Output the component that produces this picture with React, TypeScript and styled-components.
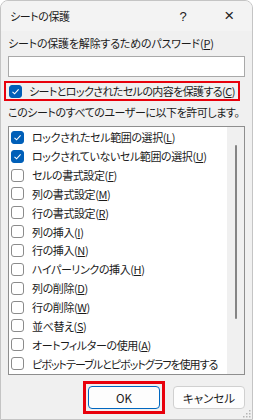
import styled, { createGlobalStyle } from 'styled-components';

const Global = createGlobalStyle`
  html, body {
    margin: 0;
    padding: 0;
    background: #ffffff;
  }
  * {
    box-sizing: border-box;
  }
`;

const Window = styled.div`
  width: 253px;
  height: 420px;
  background: #f0f0f0;
  border: 1px solid #c4c4c4;
  border-radius: 8px 8px 0 0;
  position: relative;
  font-family: "Noto Sans CJK JP", "Noto Sans", sans-serif;
  font-size: 11px;
  letter-spacing: -0.4px;
  font-feature-settings: "palt";
  color: #1b1b1b;
  display: flex;
  flex-direction: column;
  overflow: hidden;
`;

const TitleBar = styled.div`
  height: 30px;
  display: flex;
  align-items: center;
  padding-left: 9px;
  background: #f3f3f3;
`;

const Title = styled.div`
  flex: 1;
`;

const TitleButton = styled.div<{ big?: boolean }>`
  width: 46px;
  text-align: center;
  font-size: ${(p) => (p.big ? '17px' : '13px')};
  font-family: "Liberation Sans", sans-serif;
  font-weight: 300;
  color: #222;
`;

const Body = styled.div`
  padding: 2px 7px 0 6px;
  display: flex;
  flex-direction: column;
`;

const Label = styled.div<{ wide?: boolean }>`
  height: 20px;
  line-height: 20px;
  padding-left: 1px;
  white-space: nowrap;
  letter-spacing: ${(p) => (p.wide ? '-0.2px' : '-0.45px')};
`;

const Input = styled.div`
  height: 21px;
  background: #fff;
  border: 1px solid #a9a9a9;
  margin: 3px 0 4px 1px;
`;

const Highlight = styled.div`
  border: 2px solid #e8000b;
  margin-left: -3px;
  margin-right: 5px;
  height: 20px;
  display: flex;
  align-items: center;
  padding-left: 3px;
  white-space: nowrap;
  letter-spacing: -0.6px;
`;

const Row = styled.div<{ tight?: boolean }>`
  display: flex;
  align-items: center;
  height: 18.85px;
  white-space: nowrap;
  padding-left: 1px;
  letter-spacing: ${(p) => (p.tight ? '-1px' : '-0.4px')};
`;

const Box = styled.span<{ checked?: boolean; gap?: number }>`
  width: 13px;
  height: 13px;
  border-radius: 3px;
  flex-shrink: 0;
  margin-right: ${(p) => p.gap ?? 8}px;
  display: inline-flex;
  align-items: center;
  justify-content: center;
  background: ${(p) => (p.checked ? '#005fb8' : '#ffffff')};
  border: 1px solid ${(p) => (p.checked ? '#005fb8' : '#8b8b8b')};
`;

const Key = styled.span`
  text-decoration: underline;
  text-underline-offset: 1px;
`;

const ListBox = styled.div`
  margin-left: 1px;
  height: 249px;
  background: #fff;
  border: 1px solid #8e8e8e;
  display: flex;
`;

const List = styled.div`
  flex: 1;
  padding: 1px 0 0 1px;
  overflow: hidden;
`;

const ScrollTrack = styled.div`
  width: 17px;
  background: #f0f0f0;
  display: flex;
  justify-content: center;
  padding: 18px 0 55px;
`;

const Thumb = styled.div`
  width: 2px;
  height: 100%;
  background: #858585;
  border-radius: 1px;
`;

const Buttons = styled.div`
  display: flex;
  justify-content: flex-end;
  align-items: center;
  gap: 8px;
  margin-top: 6px;
`;

const Focus = styled.div`
  border: 3px solid #e8000b;
  padding: 2px;
`;

const Button = styled.button<{ primary?: boolean }>`
  width: 72px;
  height: 23px;
  border-radius: 4px;
  background: #fdfdfd;
  border: 1px solid ${(p) => (p.primary ? '#0067c0' : '#d0d0d0')};
  font-family: "Noto Sans CJK JP", "Noto Sans", sans-serif;
  font-feature-settings: "palt";
  font-size: 11.5px;
  color: #1b1b1b;
  padding: 0;
`;

const Grip = styled.svg`
  position: absolute;
  right: 1px;
  bottom: 1px;
`;

const Check = () => (
  <svg width="9" height="9" viewBox="0 0 9 9">
    <path d="M1.5 4.8 L3.6 6.8 L7.6 2.4" fill="none" stroke="#fff" strokeWidth="1.1" />
  </svg>
);

const items: [string, string, boolean][] = [
  ['ロックされたセル範囲の選択', 'L', true],
  ['ロックされていないセル範囲の選択', 'U', true],
  ['セルの書式設定', 'F', false],
  ['列の書式設定', 'M', false],
  ['行の書式設定', 'R', false],
  ['列の挿入', 'I', false],
  ['行の挿入', 'N', false],
  ['ハイパーリンクの挿入', 'H', false],
  ['列の削除', 'D', false],
  ['行の削除', 'W', false],
  ['並べ替え', 'S', false],
  ['オートフィルターの使用', 'A', false],
  ['ピボットテーブルとピボットグラフを使用する', '', false],
];

export default function App() {
  return (
    <>
      <Global />
      <Window>
        <TitleBar>
          <Title>シートの保護</Title>
          <TitleButton>?</TitleButton>
          <TitleButton big>×</TitleButton>
        </TitleBar>
        <Body>
          <Label wide>
            シートの保護を解除するためのパスワード(<Key>P</Key>)
          </Label>
          <Input />
          <Highlight>
            <Box checked gap={7}>
              <Check />
            </Box>
            <span>
              シートとロックされたセルの内容を保護する(<Key>C</Key>)
            </span>
          </Highlight>
          <Label style={{ marginTop: 1, marginBottom: 4 }}>
            このシートのすべてのユーザーに以下を許可します。
          </Label>
          <ListBox>
            <List>
              {items.map(([text, key, checked]) => (
                <Row key={text} tight={!key}>
                  <Box checked={checked}>{checked && <Check />}</Box>
                  <span>
                    {text}
                    {key && (
                      <>
                        (<Key>{key}</Key>)
                      </>
                    )}
                  </span>
                </Row>
              ))}
            </List>
            <ScrollTrack>
              <Thumb />
            </ScrollTrack>
          </ListBox>
          <Buttons>
            <Focus>
              <Button primary>OK</Button>
            </Focus>
            <Button>キャンセル</Button>
          </Buttons>
        </Body>
        <Grip width="8" height="8" viewBox="0 0 8 8">
          <g fill="#b5b5b5">
            <rect x="6" y="0" width="1.5" height="1.5" />
            <rect x="3" y="3" width="1.5" height="1.5" />
            <rect x="6" y="3" width="1.5" height="1.5" />
            <rect x="0" y="6" width="1.5" height="1.5" />
            <rect x="3" y="6" width="1.5" height="1.5" />
            <rect x="6" y="6" width="1.5" height="1.5" />
          </g>
        </Grip>
      </Window>
    </>
  );
}
